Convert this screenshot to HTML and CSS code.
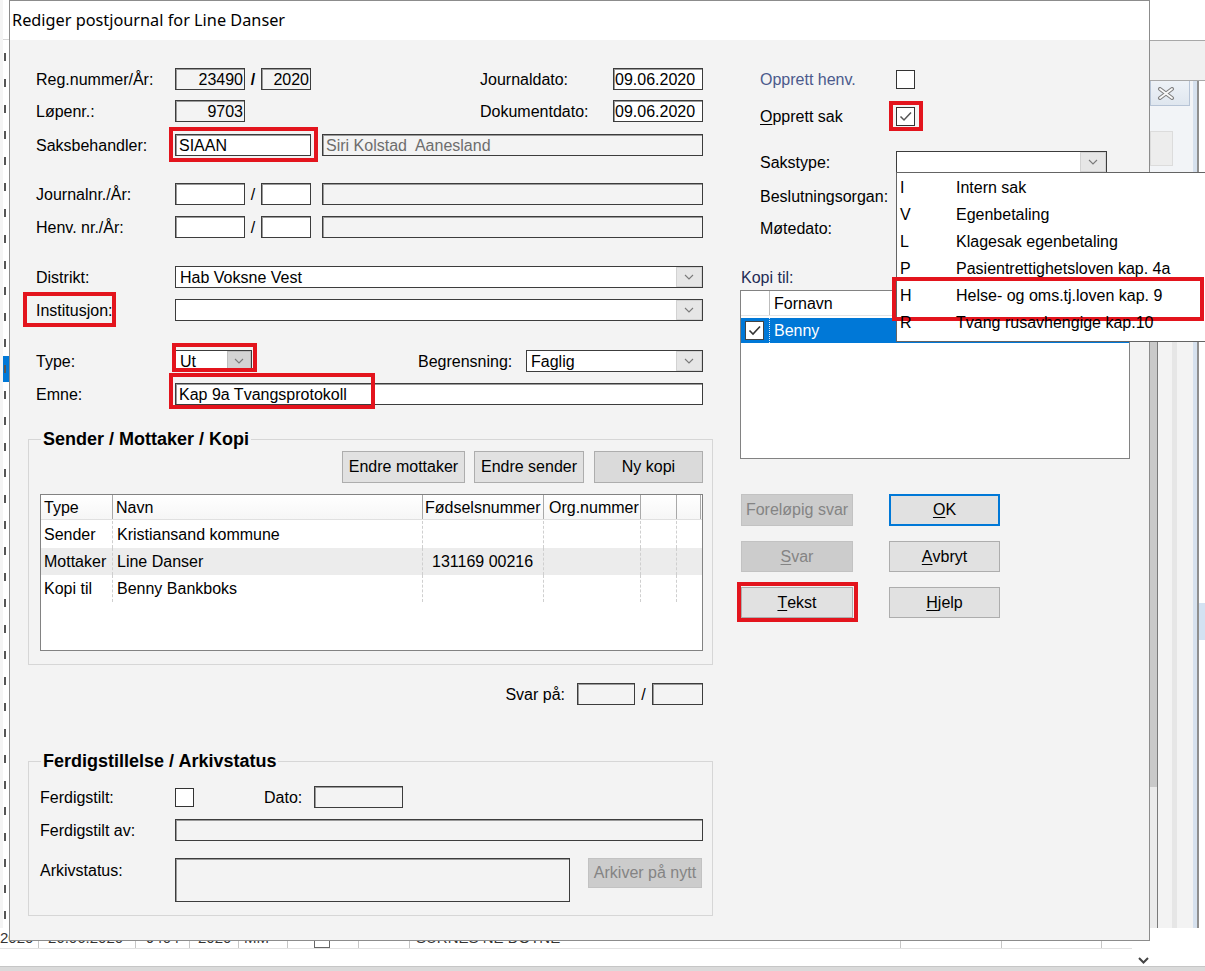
FILE: index.html
```html
<!DOCTYPE html>
<html lang="no">
<head>
<meta charset="utf-8">
<title>Rediger postjournal for Line Danser</title>
<link rel="stylesheet" href="styles.css">
</head>
<body>
<div class="desktop">

  <div class="bg-left">
    <div class="bgl-top"></div>
    <div class="bgl-list">
      <div class="bgl-row"></div><div class="bgl-row"></div><div class="bgl-row"></div><div class="bgl-row"></div>
      <div class="bgl-row"></div><div class="bgl-row"></div><div class="bgl-row"></div><div class="bgl-row"></div>
      <div class="bgl-row"></div><div class="bgl-row"></div><div class="bgl-row"></div><div class="bgl-row"></div>
      <div class="bgl-row sel"></div><div class="bgl-row"></div><div class="bgl-row"></div><div class="bgl-row"></div>
      <div class="bgl-row"></div><div class="bgl-row"></div><div class="bgl-row"></div><div class="bgl-row"></div>
      <div class="bgl-row"></div><div class="bgl-row"></div><div class="bgl-row"></div><div class="bgl-row"></div>
      <div class="bgl-row"></div><div class="bgl-row"></div><div class="bgl-row"></div><div class="bgl-row"></div>
      <div class="bgl-row"></div><div class="bgl-row"></div><div class="bgl-row"></div><div class="bgl-row"></div>
      <div class="bgl-row"></div><div class="bgl-row"></div>
    </div>
  </div>

  <div class="bg-right">
    <div class="bgr-top"></div>
    <div class="bgr-toolbar"></div>
    <div class="bgr-tabarea">
      <div class="bgr-tabcol">
        <div class="bgr-tab">
          <svg width="18" height="13" viewBox="0 0 18 13"><path d="M3 2 L15 11 M15 2 L3 11" stroke="#808080" stroke-width="4" stroke-linecap="round"/><path d="M3 2 L15 11 M15 2 L3 11" stroke="#fafafa" stroke-width="1.8" stroke-linecap="round"/></svg>
        </div>
        <div class="bgr-tabbox"></div>
      </div>
      <div class="bgr-frame"></div>
      <div class="bgr-edge"></div>
      <div class="bgr-white"></div>
    </div>
    <div class="bgr-lower">
      <div class="bgr-scroll"></div>
      <div class="bgr-pane"></div>
      <div class="bgr-frame"></div>
      <div class="bgr-edge"></div>
      <div class="bgr-white band"></div>
    </div>
  </div>

  <div class="bg-bottom">
    <div class="bgb-row">
      <span class="bgb-c bc1">2020</span>
      <span class="bgb-c bc2">26.06.2020</span>
      <span class="bgb-c bc3">9404</span>
      <span class="bgb-c bc4">2020</span>
      <span class="bgb-c bc5">MM</span>
      <span class="bgb-c bc6"><span class="bgb-chk"></span></span>
      <span class="bgb-c bc7"></span>
      <span class="bgb-c bc8">SURNES NE DOTNE</span>
      <span class="bgb-c bc9"></span>
      <span class="bgb-c bc10"></span>
    </div>
    <div class="bgb-line"></div>
    <div class="bgb-space"><svg width="11" height="7" viewBox="0 0 11 7"><path d="M1 1 L5.5 5.5 L10 1" fill="none" stroke="#444" stroke-width="2"/></svg></div>
    <div class="bgb-strip"></div>
  </div>

  <div class="dialog">
    <div class="titlebar">Rediger postjournal for Line Danser</div>
    <div class="dlg-body">

      <div class="col-left">
        <div class="row">
          <span class="lbl">Reg.nummer/År:</span>
          <span class="box dis w70 ra">23490</span>
          <span class="slash bold">/</span>
          <span class="box dis w50 ra">2020</span>
          <span class="lbl2 push">Journaldato:</span>
          <span class="box w90">09.06.2020</span>
        </div>
        <div class="row mt10">
          <span class="lbl">Løpenr.:</span>
          <span class="box dis w70 ra">9703</span>
          <span class="lbl2 push">Dokumentdato:</span>
          <span class="box w90">09.06.2020</span>
        </div>
        <div class="row mt12">
          <span class="lbl">Saksbehandler:</span>
          <span class="box w136 hl hl-siaan">SIAAN</span>
          <span class="box dis wlong ml11 grey">Siri Kolstad&nbsp; Aanesland</span>
        </div>
        <div class="row mt27">
          <span class="lbl">Journalnr./År:</span>
          <span class="box w70"></span>
          <span class="slash">/</span>
          <span class="box w50"></span>
          <span class="box dis wlong ml11"></span>
        </div>
        <div class="row mt11">
          <span class="lbl">Henv. nr./År:</span>
          <span class="box w70"></span>
          <span class="slash">/</span>
          <span class="box w50"></span>
          <span class="box dis wlong ml11"></span>
        </div>
        <div class="row mt28">
          <span class="lbl">Distrikt:</span>
          <span class="combo w528"><span class="cval">Hab Voksne Vest</span><span class="cbtn"><svg width="10" height="6" viewBox="0 0 10 6"><path d="M1 1 L5 5 L9 1" fill="none" stroke="#7a7a7a" stroke-width="1.1"/></svg></span></span>
        </div>
        <div class="row mt11">
          <span class="lbl"><span class="hl hl-inst">Institusjon:</span></span>
          <span class="combo w528"><span class="cval"></span><span class="cbtn"><svg width="10" height="6" viewBox="0 0 10 6"><path d="M1 1 L5 5 L9 1" fill="none" stroke="#7a7a7a" stroke-width="1.1"/></svg></span></span>
        </div>
        <div class="row mt29">
          <span class="lbl">Type:</span>
          <span class="combo w77 hl hl-type"><span class="cval">Ut</span><span class="cbtn dark w24"><svg width="10" height="6" viewBox="0 0 10 6"><path d="M1 1 L5 5 L9 1" fill="none" stroke="#7a7a7a" stroke-width="1.1"/></svg></span></span>
          <span class="lbl3 push">Begrensning:</span>
          <span class="combo w177"><span class="cval">Faglig</span><span class="cbtn"><svg width="10" height="6" viewBox="0 0 10 6"><path d="M1 1 L5 5 L9 1" fill="none" stroke="#7a7a7a" stroke-width="1.1"/></svg></span></span>
        </div>
        <div class="row mt11">
          <span class="lbl">Emne:</span>
          <span class="box w528 hl hl-emne">Kap 9a Tvangsprotokoll</span>
        </div>

        <fieldset class="grp g1">
          <legend>Sender / Mottaker / Kopi</legend>
          <div class="g1-btns">
            <button type="button" class="btn w123">Endre mottaker</button>
            <button type="button" class="btn w110">Endre sender</button>
            <button type="button" class="btn w109 hover">Ny kopi</button>
          </div>
          <div class="lv">
            <div class="lv-head">
              <span class="c1">Type</span><span class="c2">Navn</span><span class="c3">Fødselsnummer</span><span class="c4">Org.nummer</span><span class="c5"></span><span class="c6"></span>
            </div>
            <div class="lv-row">
              <span class="c1">Sender</span><span class="c2">Kristiansand kommune</span><span class="c3"></span><span class="c4"></span><span class="c5"></span><span class="c6"></span>
            </div>
            <div class="lv-row alt">
              <span class="c1">Mottaker</span><span class="c2">Line Danser</span><span class="c3 num">131169 00216</span><span class="c4"></span><span class="c5"></span><span class="c6"></span>
            </div>
            <div class="lv-row">
              <span class="c1">Kopi til</span><span class="c2">Benny Bankboks</span><span class="c3"></span><span class="c4"></span><span class="c5"></span><span class="c6"></span>
            </div>
          </div>
        </fieldset>

        <div class="row mt18">
          <span class="push svar">Svar på:</span>
          <span class="box dis w58 ml12"></span>
          <span class="slash w17">/</span>
          <span class="box dis w51"></span>
        </div>

        <fieldset class="grp g2">
          <legend>Ferdigstillelse / Arkivstatus</legend>
          <div class="frow">
            <span class="flbl">Ferdigstilt:</span>
            <span class="chk"></span>
            <span class="dato-lbl">Dato:</span>
            <span class="box dis w89"></span>
          </div>
          <div class="frow mt11 h23">
            <span class="flbl">Ferdigstilt av:</span>
            <span class="box dis w528 h23"></span>
          </div>
          <div class="frow mt17 tall">
            <span class="flbl top">Arkivstatus:</span>
            <span class="box dis w395 h44"></span>
            <button type="button" class="btn dis arkiv">Arkiver på nytt</button>
          </div>
        </fieldset>
      </div>

      <div class="col-right">
        <div class="rrow">
          <span class="rlbl blue">Opprett henv.</span>
          <span class="chk"></span>
        </div>
        <div class="rrow mt15">
          <span class="rlbl"><u>O</u>pprett sak</span>
          <span class="chk hl hl-sak"><svg width="15" height="15" viewBox="0 0 15 15"><path d="M2.5 7.5 L6 11 L13 3.5" fill="none" stroke="#555" stroke-width="1.5"/></svg></span>
        </div>
        <div class="rrow mt24 h23">
          <span class="rlbl">Sakstype:</span>
          <span class="combo w211 h23 dd-anchor"><span class="cval"></span><span class="cbtn"><svg width="10" height="6" viewBox="0 0 10 6"><path d="M1 1 L5 5 L9 1" fill="none" stroke="#7a7a7a" stroke-width="1.1"/></svg></span>
            <span class="popup">
              <span class="pitem"><span class="pcode">I</span><span>Intern sak</span></span>
              <span class="pitem"><span class="pcode">V</span><span>Egenbetaling</span></span>
              <span class="pitem"><span class="pcode">L</span><span>Klagesak egenbetaling</span></span>
              <span class="pitem"><span class="pcode">P</span><span>Pasientrettighetsloven kap. 4a</span></span>
              <span class="pitem hl-h"><span class="pcode">H</span><span>Helse- og oms.tj.loven kap. 9</span></span>
              <span class="pitem"><span class="pcode">R</span><span>Tvang rusavhengige kap.10</span></span>
            </span>
          </span>
        </div>
        <div class="rrow mt12">
          <span class="rlbl">Beslutningsorgan:</span>
        </div>
        <div class="rrow mt10">
          <span class="rlbl">Møtedato:</span>
        </div>
        <div class="kopi-lbl">Kopi til:</div>
        <div class="kopi-list">
          <div class="kl-head"><span class="kl-c1"></span><span class="kl-c2">Fornavn</span></div>
          <div class="kl-row">
            <span class="kl-c1"><span class="chk small"><svg width="15" height="15" viewBox="0 0 15 15"><path d="M2.5 7.5 L6 11 L13 3.5" fill="none" stroke="#333" stroke-width="1.6"/></svg></span></span>
            <span class="kl-c2">Benny</span>
          </div>
        </div>
        <div class="btn-grid">
          <button type="button" class="btn dis">Foreløpig svar</button>
          <button type="button" class="btn ok"><u>O</u>K</button>
          <button type="button" class="btn dis"><u>S</u>var</button>
          <button type="button" class="btn"><u>A</u>vbryt</button>
          <button type="button" class="btn hl hl-tekst"><u>T</u>ekst</button>
          <button type="button" class="btn"><u>H</u>jelp</button>
        </div>
      </div>

    </div>
  </div>
</div>
</body>
</html>
```

FILE: styles.css
```css
* { box-sizing: border-box; }
html, body { margin: 0; padding: 0; background: #fff; }
body { font-family: "Liberation Sans", Arial, sans-serif; font-size: 16px; color: #000; line-height: 1.15; }
.desktop { position: relative; width: 1205px; height: 971px; overflow: hidden; background: #fff; }

/* ---------- background application (windows behind the dialog) ---------- */
.bg-left { position: absolute; left: 0; top: 0; width: 12px; height: 940px; background: #fff; overflow: hidden; border-left: 3px solid #f4f4f4; }
.bgl-top { height: 40px; border-bottom: 1px solid #d6d6d6; }
.bgl-list { padding-top: 4px; }
.bgl-row { height: 26px; background: linear-gradient(90deg, transparent 0 1px, #555 1px 3px, transparent 3px) no-repeat 0 9px / 4px 8px; }
.bgl-row.sel { background-color: #0078d7; }

.bg-right { position: absolute; left: 1140px; top: 0; width: 65px; height: 971px; background: #fff; display: flex; flex-direction: column; }
.bgr-top { height: 40px; flex: none; }
.bgr-toolbar { height: 41px; flex: none; background: #f0f0f0; border-top: 1px solid #a8a8a8; border-bottom: 1px solid #a8a8a8; }
.bgr-tabarea { height: 93px; flex: none; display: flex; padding-left: 10px; }
.bgr-tabcol { width: 43px; flex: none; background: #f2f4f7; display: flex; flex-direction: column; align-items: flex-start; }
.bgr-tab { width: 40px; height: 25px; background: linear-gradient(#eef2f7, #dfe6ef); border: 1px solid #b7c4d6; border-top: none; display: flex; align-items: center; padding-left: 6px; }
.bgr-tabbox { margin-top: 25px; width: 23px; height: 35px; background: #ededed; border: 1px solid #dcdcdc; }
.bgr-frame { width: 4px; flex: none; background: #d6e1ee; }
.bgr-edge { width: 2px; flex: none; background: #8f8f8f; }
.bgr-white { flex: 1; background: #fff; }
.bgr-lower { flex: 1; display: flex; padding-left: 10px; }
.bgr-scroll { width: 8px; flex: none; background: linear-gradient(#c9c9c9 0 613px, #ebebeb 613px); border-right: 1px solid #7a7a7a; }
.bgr-pane { width: 35px; flex: none; background: linear-gradient(90deg, #f3f3f3 0 14px, #e6e6e6 14px 19px, #f3f3f3 19px); }
.bgr-white.band { background: linear-gradient(#fff 0 429px, #d3e2f2 429px 466px, #fff 466px); }

.bg-bottom { position: absolute; left: 0; top: 928px; width: 1205px; height: 43px; background: #fff; display: flex; flex-direction: column; }
.bgb-row { height: 20px; flex: none; display: flex; white-space: nowrap; color: #333; font-size: 15px; line-height: 20px; }
.bgb-c { flex: none; border-right: 1px solid #c6c6c6; padding-left: 6px; overflow: hidden; }
.bc1 { width: 39px; padding-left: 0; }
.bc2 { width: 97px; padding-left: 9px; }
.bc3 { width: 54px; padding-left: 10px; }
.bc4 { width: 49px; padding-left: 8px; }
.bc5 { width: 49px; padding-left: 5px; }
.bc6 { width: 71px; padding-left: 26px; }
.bc7 { width: 51px; }
.bc8 { width: 491px; }
.bc9 { width: 101px; }
.bc10 { width: 100px; }
.bgb-chk { display: inline-block; width: 16px; height: 18px; border: 1px solid #666; vertical-align: middle; }
.bgb-line { height: 1px; width: 1132px; background: #e2e2e2; flex: none; }
.bgb-space { height: 17px; flex: none; display: flex; justify-content: flex-end; align-items: flex-end; padding-right: 56px; padding-bottom: 2px; }
.bgb-strip { flex: 1; background: #dadada; border-top: 1px solid #c6c6c6; }

/* ---------- dialog ---------- */
.dialog { position: absolute; left: 9px; top: 0; width: 1141px; height: 941px; border: 1px solid #8c8c8c; background: #f3f3f3; display: flex; flex-direction: column; z-index: 2; }
.titlebar { height: 39px; flex: none; background: #fff; font-family: "Noto Sans", "Open Sans", sans-serif; font-size: 16.3px; line-height: 39px; padding-left: 2px; white-space: nowrap; }
.dlg-body { flex: 1; display: flex; gap: 27px; padding-left: 18px; }
.col-left { width: 685px; flex: none; padding-top: 28px; }
.col-right { width: 390px; flex: none; padding-top: 28px; }

.row { display: flex; align-items: center; height: 22px; width: 675px; white-space: nowrap; }
.mt10 { margin-top: 10px; }
.mt11 { margin-top: 11px; }
.mt12 { margin-top: 12px; }
.mt15 { margin-top: 15px; }
.mt17 { margin-top: 17px; }
.mt18 { margin-top: 18px; }
.mt24 { margin-top: 24px; }
.mt27 { margin-top: 27px; }
.mt28 { margin-top: 28px; }
.mt29 { margin-top: 29px; }
.ml11 { margin-left: 11px; }
.ml12 { margin-left: 12px; }
.push { margin-left: auto; }
.h23 { height: 23px; }
.lbl { width: 147px; flex: none; padding-left: 8px; padding-top: 2px; }
.lbl2 { width: 133px; flex: none; padding-top: 2px; }
.lbl3 { width: 108px; flex: none; padding-top: 2px; }
.svar { padding-top: 2px; }
.slash { width: 16px; flex: none; text-align: center; padding-top: 2px; }
.slash.bold { font-weight: bold; }
.slash.w17 { width: 17px; }

.box { display: block; flex: none; height: 22px; border: 1px solid #3c3c3c; box-shadow: inset 1px 1px 0 #9a9a9a; background: #fff; line-height: 20px; padding: 1px 3px 0; white-space: pre; }
.box.dis { background: #f3f3f3; }
.box.ra { text-align: right; padding-right: 1px; }
.box.grey { color: #6d6d6d; }
.w50 { width: 50px; } .w51 { width: 51px; } .w58 { width: 58px; } .w70 { width: 70px; }
.w77 { width: 77px; } .w89 { width: 89px; } .w90 { width: 90px; } .w136 { width: 136px; }
.w177 { width: 177px; } .w211 { width: 211px; } .w395 { width: 395px; } .w528 { width: 528px; }
.wlong { width: 381px; }
.box.w90 { padding-left: 1px; }
.h44 { height: 44px; }

.combo { display: flex; flex: none; height: 22px; border: 1px solid #3c3c3c; background: #fff; }
.cval { flex: 1; padding-left: 4px; padding-top: 1px; line-height: 20px; white-space: nowrap; }
.cbtn { width: 26px; flex: none; background: #e6e6e6; border: 1px solid #d2d2d2; display: flex; align-items: center; justify-content: center; }
.cbtn.dark { background: #d3d3d3; border-color: #bdbdbd; }
.cbtn.w24 { width: 24px; }

/* red annotation frames */
.hl { position: relative; }
.hl::after { content: ""; position: absolute; border: 4px solid #e3141d; pointer-events: none; z-index: 5; }
.hl-siaan::after { left: -7px; right: -8px; top: -8px; bottom: -7px; }
.hl-inst { display: inline-block; }
.hl-inst::after { left: -13px; right: -4px; top: -10px; bottom: -7px; }
.hl-type::after { left: -4px; right: -6px; top: -8px; bottom: -1px; }
.hl-emne::after { left: -7px; width: 198px; top: -11px; bottom: -5px; }
.hl-sak::after { left: -8px; right: -9px; top: -7px; bottom: -6px; }
.hl-tekst::after { left: -5px; right: -6px; top: -6px; bottom: -5px; }

/* group boxes */
.grp { margin: 0; width: 685px; border: 1px solid #d6d6d6; min-width: 0; }
.grp legend { font-weight: bold; font-size: 18px; line-height: 20px; padding: 0 2px; margin-left: 1px; white-space: nowrap; }
.g1 { margin-top: 24px; padding: 2px 9px 13px 11px; }
.g2 { margin-top: 46px; padding: 15px 9px 13px 11px; }

.btn { font: inherit; font-size: 16px; color: #000; background: #e1e1e1; border: 1px solid #adadad; padding: 1px 0 0; margin: 0; display: flex; align-items: center; justify-content: center; white-space: nowrap; }
.btn.dis { background: #cccccc; border-color: #c2c2c2; color: #848484; }
.btn.hover { background: #dadada; }
.btn.ok { border: 2px solid #0078d7; }
.btn u { text-decoration: underline; text-underline-offset: 2px; }
.g1-btns { display: flex; justify-content: flex-end; gap: 9px; height: 32px; }
.g1-btns .btn { height: 32px; }
.w123 { width: 123px; } .w110 { width: 110px; } .w109 { width: 109px; margin-left: 1px; }

.lv { margin-top: 11px; height: 157px; background: #fff; border: 1px solid #828282; }
.lv-head { display: flex; height: 25px; background: linear-gradient(#ffffff, #f6f6f6); border-bottom: 1px solid #e0e0e0; }
.lv-head span { border-right: 1px solid #a9a9a9; line-height: 25px; padding-left: 3px; white-space: nowrap; overflow: hidden; }
.lv-row { display: flex; height: 27px; }
.lv-head + .lv-row { margin-top: 1px; }
.lv-row.alt { background: #ececec; }
.lv-row span { line-height: 28px; padding-left: 3px; white-space: nowrap; overflow: hidden; border-right: 1px dashed #cfcfcf; }
.lv-row span.c6 { border-right: none; }
.lv-row .c2 { padding-left: 4px; }
.lv-row .num { padding-left: 9px; }
.c1 { width: 72px; flex: none; }
.c2 { width: 310px; flex: none; }
.c3 { width: 121px; flex: none; }
.c4 { width: 97px; flex: none; }
.c5 { width: 36px; flex: none; }
.c6 { width: 24px; flex: none; }
.lv-head .c3 { padding-left: 2px; }
.lv-head .c4 { padding-left: 5px; }

.frow { display: flex; align-items: center; height: 22px; }
.frow.tall { align-items: flex-start; height: 44px; }
.flbl { width: 135px; flex: none; padding-top: 2px; }
.flbl.top { padding-top: 4px; }
.dato-lbl { margin-left: 70px; width: 50px; flex: none; padding-top: 2px; }
.chk { display: flex; flex: none; width: 19px; height: 19px; border: 1px solid #333; background: #fff; align-items: center; justify-content: center; }
.btn.arkiv { width: 114px; height: 30px; margin-left: 18px; }

/* right column */
.rrow { display: flex; align-items: center; height: 22px; }
.rlbl { width: 156px; flex: none; padding-left: 20px; padding-top: 2px; white-space: nowrap; }
.rlbl.blue { color: #4b5a8c; }
.rlbl u { text-decoration: underline; text-underline-offset: 2px; }
.dd-anchor { position: relative; }
.popup { position: absolute; left: -1px; top: 100%; width: 330px; height: 170px; background: #fff; border: 1px solid #646464; display: flex; flex-direction: column; padding-top: 2px; z-index: 6; }
.pitem { display: flex; height: 27px; align-items: center; padding-left: 3px; white-space: nowrap; flex: none; position: relative; }
.pcode { width: 56px; flex: none; }
.hl-h::after { content: ""; position: absolute; left: -5px; width: 304px; top: -6px; height: 36px; border: 4px solid #e3141d; }

.kopi-lbl { margin-top: 28px; height: 20px; line-height: 22px; padding-left: 1px; color: #1e2b55; }
.kopi-list { margin-top: 3px; width: 390px; height: 169px; background: #fff; border: 1px solid #828282; }
.kl-head { display: flex; height: 25px; border-bottom: 1px solid #e3e3e3; }
.kl-head .kl-c1 { border-right: 1px solid #bdbdbd; }
.kl-c1 { width: 29px; flex: none; display: flex; align-items: center; padding-left: 4px; }
.kl-c2 { flex: 1; padding-left: 4px; line-height: 26px; }
.kl-row { display: flex; height: 25px; margin-top: 2px; background: #0078d7; color: #fff; }
.kl-row .kl-c1 { border-right: 1px dotted #d8e8f8; }
.kl-row .kl-c2 { line-height: 26px; }
.chk.small { width: 19px; height: 19px; border-color: #444; }

.btn-grid { margin-top: 35px; margin-left: 1px; display: grid; grid-template-columns: 112px 111px; grid-template-rows: 32px 31px 31px; column-gap: 36px; row-gap: 15px; }
```
